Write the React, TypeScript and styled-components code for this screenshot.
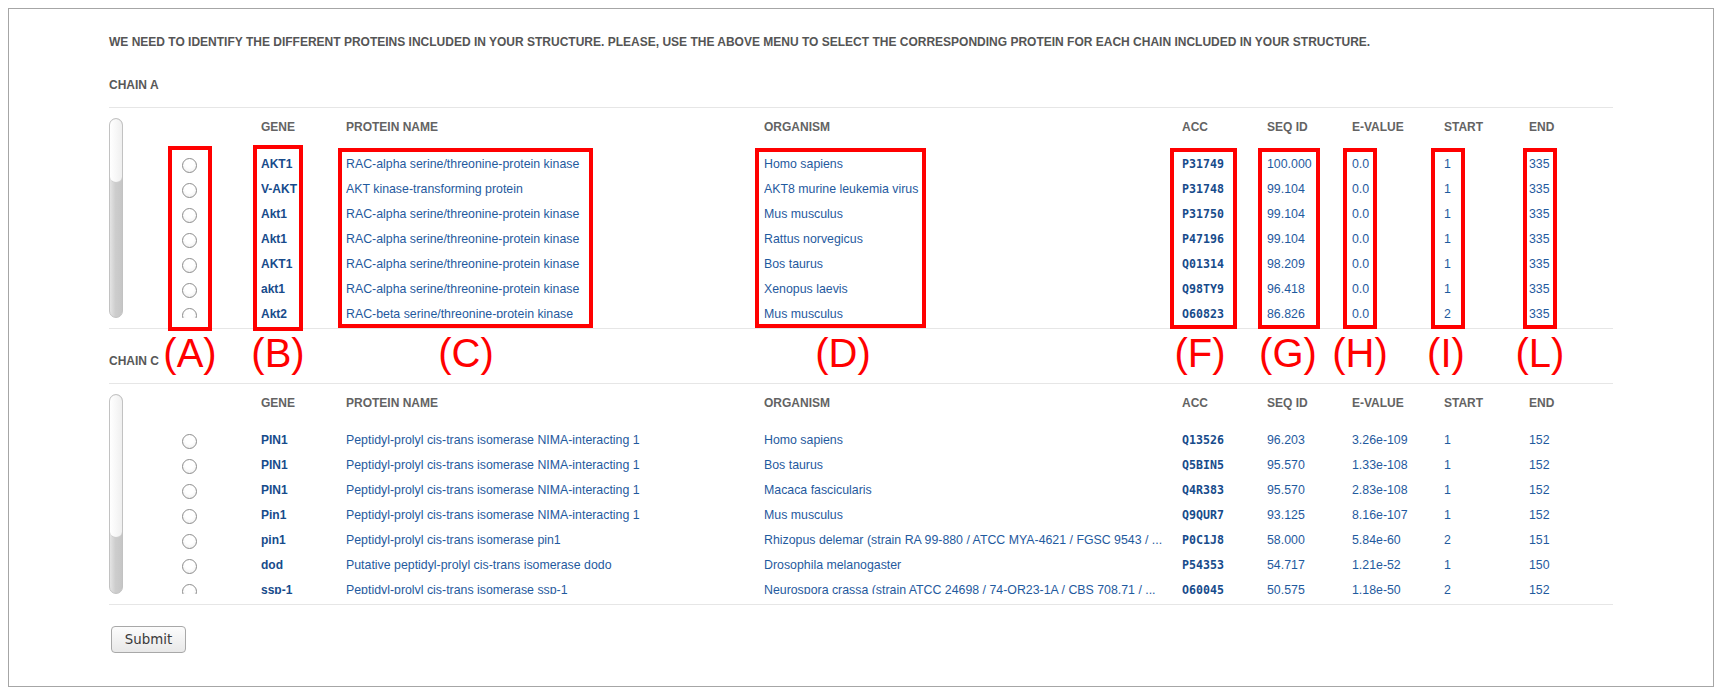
import React from "react";
import styled, { createGlobalStyle, css } from "styled-components";

const Global = createGlobalStyle`
  html, body { margin: 0; padding: 0; background: #ffffff; }
  body { font-family: "Liberation Sans", Arial, sans-serif; }
`;

const Page = styled.div`
  position: relative;
  width: 1722px;
  padding: 8px;
  box-sizing: border-box;
`;

const Frame = styled.main`
  border: 1px solid #a6a6a6;
  padding: 25px 100px 33px 100px;
`;

const Intro = styled.p`
  margin: 0 0 27px;
  font: bold 12px/16px "Liberation Sans", Arial, sans-serif;
  color: #555555;
  text-transform: uppercase;
  white-space: nowrap;
`;

const Section = styled.section<{ $first?: boolean }>`
  margin-top: ${(p) => (p.$first ? 0 : 24)}px;
  border-bottom: 1px solid #e6e6e6;
`;

const ChainTitle = styled.h3`
  margin: 0;
  padding-bottom: 14px;
  border-bottom: 1px solid #e6e6e6;
  font: bold 12px/16px "Liberation Sans", Arial, sans-serif;
  color: #585858;
`;

const TableWrap = styled.div`
  display: flex;
  padding: 10px 0;
`;

const Track = styled.div`
  flex: none;
  width: 14px;
  height: 200px;
  box-sizing: border-box;
  border: 1px solid #c2c2c2;
  border-radius: 7px;
  overflow: hidden;
  background: linear-gradient(to right, #e4e4e4, #cdcdcd 45%, #c6c6c6);
`;

const Thumb = styled.div<{ $h: number }>`
  height: ${(p) => p.$h}px;
  border-radius: 6px;
  border-bottom: 1px solid #cfcfcf;
  background: linear-gradient(to right, #ffffff, #f6f6f6 60%, #efefef);
  box-sizing: border-box;
`;

const Viewport = styled.div`
  flex: 1;
  height: 200px;
  overflow: hidden;
`;

const columns = css`
  display: grid;
  grid-template-columns: 138px 85px 418px 418px 85px 85px 92px 85px 84px;
`;

const HeadRow = styled.div`
  ${columns};
  height: 33px;
`;

const HeadCell = styled.div`
  font: bold 12px/18px "Liberation Sans", Arial, sans-serif;
  color: #636363;
  white-space: nowrap;
`;

const Row = styled.label`
  ${columns};
  height: 25px;
  align-items: center;
  cursor: pointer;
`;

const Radio = styled.input.attrs({ type: "radio" })`
  appearance: none;
  -webkit-appearance: none;
  width: 15px;
  height: 15px;
  margin: 3px 0 0 59px;
  box-sizing: border-box;
  border: 1px solid #8d8d8d;
  border-radius: 50%;
  background: radial-gradient(circle at 50% 35%, #ffffff 40%, #ececec 100%);
`;

type Kind = "gene" | "text" | "acc";

const Cell = styled.span<{ $kind?: Kind }>`
  white-space: nowrap;
  overflow: hidden;
  color: #1f5a9e;
  font: 12.35px/25px "Liberation Sans", Arial, sans-serif;
  padding-top: 1px;
  ${(p) =>
    p.$kind === "gene" &&
    css`
      font: bold 12px/25px "Liberation Sans", Arial, sans-serif;
      color: #174b8b;
    `}
  ${(p) =>
    p.$kind === "acc" &&
    css`
      font: bold 11.6px/25px "DejaVu Sans Mono", "Liberation Mono", monospace;
      color: #174b8b;
    `}
`;

const SubmitButton = styled.button`
  margin: 21px 0 0 2px;
  width: 75px;
  height: 27px;
  border: 1px solid #a8a8a8;
  border-radius: 4px;
  background: linear-gradient(#fcfcfc, #e8e8e8);
  font: 13.33px "DejaVu Sans", sans-serif;
  color: #3a3a3a;
  padding: 0;
`;

const Overlay = styled.div`
  position: absolute;
  inset: 0;
  pointer-events: none;
`;

const Mark = styled.div<{ $x: number; $y: number; $w: number; $h: number }>`
  position: absolute;
  left: ${(p) => p.$x}px;
  top: ${(p) => p.$y}px;
  width: ${(p) => p.$w}px;
  height: ${(p) => p.$h}px;
  box-sizing: border-box;
  border: 4px solid #ff0000;
`;

const Tag = styled.div<{ $cx: number }>`
  position: absolute;
  left: ${(p) => p.$cx - 40}px;
  top: 333px;
  width: 80px;
  text-align: center;
  font: 40px/40px "Liberation Sans", Arial, sans-serif;
  color: #ff0000;
`;

type Hit = {
  gene: string;
  name: string;
  org: string;
  acc: string;
  seq: string;
  ev: string;
  start: string;
  end: string;
};

const RAC = "RAC-alpha serine/threonine-protein kinase";
const PIN = "Peptidyl-prolyl cis-trans isomerase NIMA-interacting 1";

const chainA: Hit[] = [
  { gene: "AKT1", name: RAC, org: "Homo sapiens", acc: "P31749", seq: "100.000", ev: "0.0", start: "1", end: "335" },
  { gene: "V-AKT", name: "AKT kinase-transforming protein", org: "AKT8 murine leukemia virus", acc: "P31748", seq: "99.104", ev: "0.0", start: "1", end: "335" },
  { gene: "Akt1", name: RAC, org: "Mus musculus", acc: "P31750", seq: "99.104", ev: "0.0", start: "1", end: "335" },
  { gene: "Akt1", name: RAC, org: "Rattus norvegicus", acc: "P47196", seq: "99.104", ev: "0.0", start: "1", end: "335" },
  { gene: "AKT1", name: RAC, org: "Bos taurus", acc: "Q01314", seq: "98.209", ev: "0.0", start: "1", end: "335" },
  { gene: "akt1", name: RAC, org: "Xenopus laevis", acc: "Q98TY9", seq: "96.418", ev: "0.0", start: "1", end: "335" },
  { gene: "Akt2", name: "RAC-beta serine/threonine-protein kinase", org: "Mus musculus", acc: "Q60823", seq: "86.826", ev: "0.0", start: "2", end: "335" },
];

const chainC: Hit[] = [
  { gene: "PIN1", name: PIN, org: "Homo sapiens", acc: "Q13526", seq: "96.203", ev: "3.26e-109", start: "1", end: "152" },
  { gene: "PIN1", name: PIN, org: "Bos taurus", acc: "Q5BIN5", seq: "95.570", ev: "1.33e-108", start: "1", end: "152" },
  { gene: "PIN1", name: PIN, org: "Macaca fascicularis", acc: "Q4R383", seq: "95.570", ev: "2.83e-108", start: "1", end: "152" },
  { gene: "Pin1", name: PIN, org: "Mus musculus", acc: "Q9QUR7", seq: "93.125", ev: "8.16e-107", start: "1", end: "152" },
  { gene: "pin1", name: "Peptidyl-prolyl cis-trans isomerase pin1", org: "Rhizopus delemar (strain RA 99-880 / ATCC MYA-4621 / FGSC 9543 / ...", acc: "P0C1J8", seq: "58.000", ev: "5.84e-60", start: "2", end: "151" },
  { gene: "dod", name: "Putative peptidyl-prolyl cis-trans isomerase dodo", org: "Drosophila melanogaster", acc: "P54353", seq: "54.717", ev: "1.21e-52", start: "1", end: "150" },
  { gene: "ssp-1", name: "Peptidyl-prolyl cis-trans isomerase ssp-1", org: "Neurospora crassa (strain ATCC 24698 / 74-OR23-1A / CBS 708.71 / ...", acc: "O60045", seq: "50.575", ev: "1.18e-50", start: "2", end: "152" },
];

const HEADERS = ["", "GENE", "PROTEIN NAME", "ORGANISM", "ACC", "SEQ ID", "E-VALUE", "START", "END"];

function Chain({ id, rows, thumb, first }: { id: string; rows: Hit[]; thumb: number; first?: boolean }) {
  return (
    <Section $first={first}>
      <ChainTitle>CHAIN {id}</ChainTitle>
      <TableWrap>
        <Track>
          <Thumb $h={thumb} />
        </Track>
        <Viewport>
          <HeadRow>
            {HEADERS.map((h, i) => (
              <HeadCell key={i}>{h}</HeadCell>
            ))}
          </HeadRow>
          {rows.map((r, i) => (
            <Row key={i}>
              <Radio name={`chain-${id}`} />
              <Cell $kind="gene">{r.gene}</Cell>
              <Cell>{r.name}</Cell>
              <Cell>{r.org}</Cell>
              <Cell $kind="acc">{r.acc}</Cell>
              <Cell>{r.seq}</Cell>
              <Cell>{r.ev}</Cell>
              <Cell>{r.start}</Cell>
              <Cell>{r.end}</Cell>
            </Row>
          ))}
        </Viewport>
      </TableWrap>
    </Section>
  );
}

const MARKS = [
  { x: 168, y: 146, w: 44, h: 185 },
  { x: 253, y: 145, w: 50, h: 186 },
  { x: 338, y: 148, w: 255, h: 180 },
  { x: 755, y: 148, w: 171, h: 180 },
  { x: 1170, y: 148, w: 67, h: 181 },
  { x: 1258, y: 148, w: 62, h: 181 },
  { x: 1343, y: 148, w: 34, h: 181 },
  { x: 1431, y: 148, w: 34, h: 181 },
  { x: 1523, y: 148, w: 34, h: 181 },
];

const TAGS = [
  { t: "(A)", x: 190 },
  { t: "(B)", x: 278 },
  { t: "(C)", x: 466 },
  { t: "(D)", x: 843 },
  { t: "(F)", x: 1200 },
  { t: "(G)", x: 1288 },
  { t: "(H)", x: 1360 },
  { t: "(I)", x: 1446 },
  { t: "(L)", x: 1540 },
];

export default function App() {
  return (
    <Page>
      <Global />
      <Frame>
        <Intro>
          We need to identify the different proteins included in your structure. Please, use the above menu to select
          the corresponding protein for each chain included in your structure.
        </Intro>
        <Chain id="A" rows={chainA} thumb={64} first />
        <Chain id="C" rows={chainC} thumb={143} />
        <SubmitButton type="button">Submit</SubmitButton>
      </Frame>
      <Overlay>
        {MARKS.map((m, i) => (
          <Mark key={i} $x={m.x} $y={m.y} $w={m.w} $h={m.h} />
        ))}
        {TAGS.map((t) => (
          <Tag key={t.t} $cx={t.x}>
            {t.t}
          </Tag>
        ))}
      </Overlay>
    </Page>
  );
}
